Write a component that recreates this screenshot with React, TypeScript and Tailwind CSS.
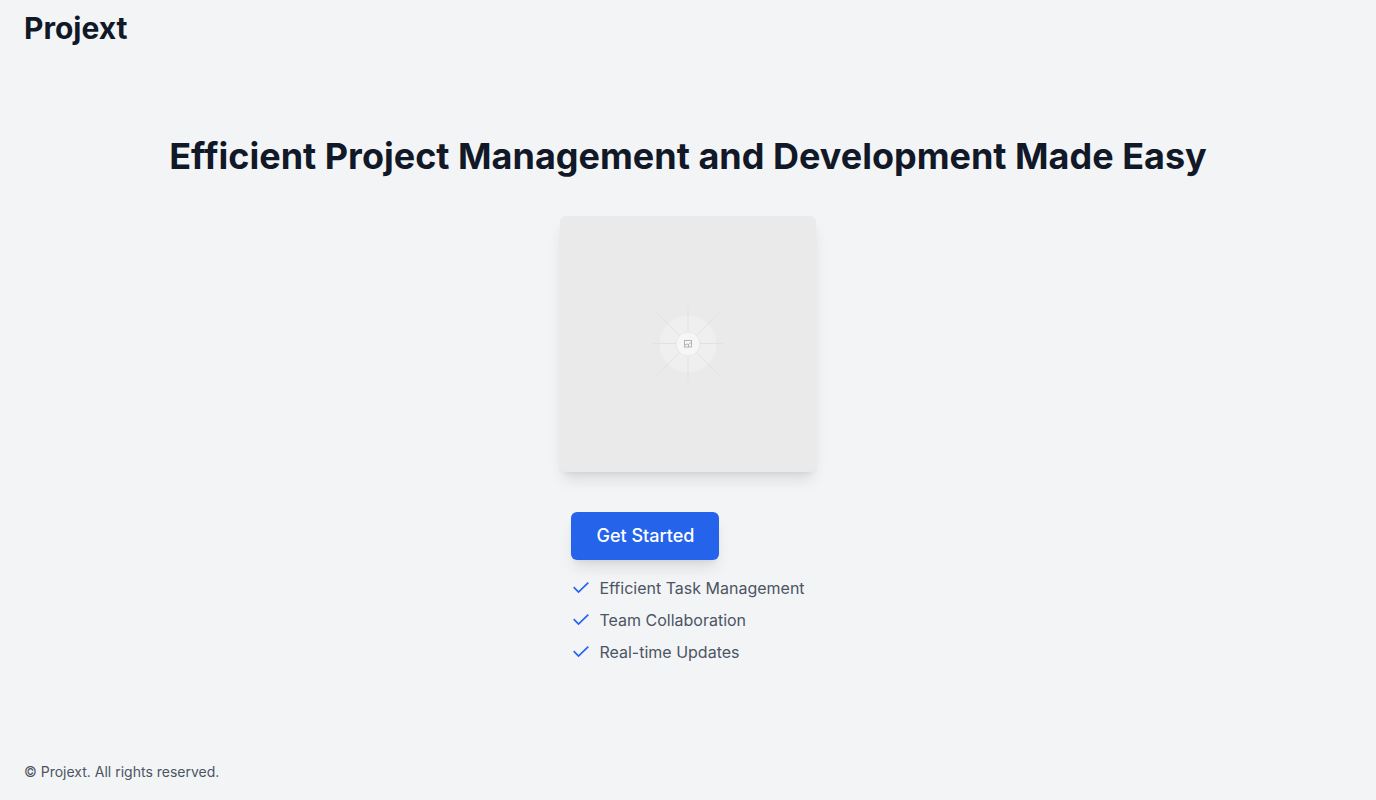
export default function App() {
  const features = ["Efficient Task Management", "Team Collaboration", "Real-time Updates"];
  return (
    <div className="flex min-h-screen flex-col bg-[#f3f4f6] font-['Inter',sans-serif] text-[#111827]">
      <header className="flex h-14 items-center px-6">
        <h1 className="text-3xl font-bold">Projext</h1>
      </header>
      <main className="flex flex-1 flex-col items-center justify-center px-6">
        <h2 className="mb-10 text-center text-4xl font-bold">
          Efficient Project Management and Development Made Easy
        </h2>
        <svg
          role="img"
          aria-label="Placeholder"
          viewBox="0 0 256 256"
          className="mb-10 size-64 rounded-md bg-[#eaeaea] shadow-lg"
          fill="none"
        >
          <defs>
            <radialGradient id="ray" gradientUnits="userSpaceOnUse" cx="128" cy="128" r="56">
              <stop offset="0.5" stopColor="#dcdcdc" />
              <stop offset="1" stopColor="#dcdcdc" stopOpacity="0" />
            </radialGradient>
          </defs>
          <circle cx="128" cy="128" r="28.500" fill="#efefef" />
          <path
            d="M92 127.500H164M128 90V166M89 89L167 167M167 89L89 167"
            stroke="url(#ray)"
            strokeWidth="0.7"
          />
          <circle cx="128" cy="128" r="12" fill="#f6f6f6" stroke="#e2e2e2" strokeWidth="0.7" />
          <g stroke="#a3a3a3" strokeWidth="0.8">
            <rect x="124.500" y="124.500" width="7" height="6.500" />
            <path d="M124.500 129L127 128L128.500 128.500L131.500 126M128.500 128.500V131" />
          </g>
        </svg>
        <div className="flex flex-col items-start gap-4">
          <button className="w-37 rounded-md bg-[#2563eb] py-2.5 text-lg font-medium text-white shadow-lg">
            Get Started
          </button>
          <ul className="flex flex-col gap-2 text-[#4b5563]">
            {features.map((f) => (
              <li key={f} className="flex items-center gap-2">
                <svg
                  viewBox="0 0 20 20"
                  className="size-5"
                  fill="none"
                  stroke="#2563eb"
                  strokeWidth="1.7"
                  aria-hidden="true"
                >
                  <path d="M2.700 9.200L7.500 14L17.300 4.600" />
                </svg>
                {f}
              </li>
            ))}
          </ul>
        </div>
      </main>
      <footer className="flex h-14 items-center px-6 text-sm text-[#4b5563]">
        © Projext. All rights reserved.
      </footer>
    </div>
  );
}
